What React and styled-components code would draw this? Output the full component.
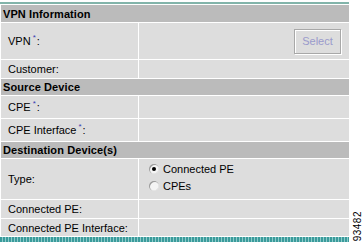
import React from "react";
import styled, { createGlobalStyle } from "styled-components";

const GlobalStyle = createGlobalStyle`
  html, body {
    margin: 0;
    padding: 0;
    background: #ffffff;
  }
  body {
    font-family: "Liberation Sans", Arial, sans-serif;
    font-size: 11px;
    color: #000;
  }
`;

const Page = styled.div`
  display: flex;
  align-items: flex-end;
  width: 363px;
  height: 242px;
  overflow: hidden;
`;

const Panel = styled.div`
  width: 350px;
  padding-top: 2px;
  display: flex;
  flex-direction: column;
`;

const TopRule = styled.div`
  height: 2px;
  background: #82b4aa;
  margin-bottom: 1px;
`;

const Grid = styled.div`
  display: grid;
  grid-template-columns: 137px 1fr;
  gap: 1px;
  background: #ffffff;
  padding-left: 1px;
`;

const SectionHead = styled.div`
  grid-column: 1 / span 2;
  background: #bbbbbb;
  height: ${(p) => p.$h}px;
  display: flex;
  align-items: center;
  padding-left: 2px;
  font-weight: bold;
  font-size: 11px;
  letter-spacing: 0.1px;
`;

const Label = styled.div`
  background: #dddddd;
  height: ${(p) => p.$h}px;
  display: flex;
  align-items: center;
  padding-left: 7px;
  white-space: nowrap;
`;

const Value = styled.div`
  background: #dddddd;
  height: ${(p) => p.$h}px;
  display: flex;
  align-items: center;
  justify-content: ${(p) => (p.$end ? "flex-end" : "flex-start")};
  padding-right: ${(p) => (p.$end ? "8px" : "0")};
`;

const Req = styled.sup`
  color: #3a3ab0;
  font-size: 8px;
  position: relative;
  top: -4px;
  margin: 0 1px 0 2px;
`;

const SelectButton = styled.button`
  width: 47px;
  height: 25px;
  background: #dddddd;
  border: 1px solid #a8a8a8;
  box-shadow: inset 1px 1px 0 #ffffff, 1px 1px 0 #ffffff;
  color: #9a9acc;
  font-family: "Liberation Sans", Arial, sans-serif;
  font-size: 11px;
  padding: 0;
`;

const RadioGroup = styled.div`
  display: flex;
  flex-direction: column;
  gap: 5px;
  padding-left: 10px;
  margin-top: -3px;
`;

const RadioRow = styled.label`
  display: flex;
  align-items: center;
  gap: 4px;
`;

const RadioDot = styled.span`
  width: 10px;
  height: 10px;
  border-radius: 50%;
  background: radial-gradient(circle, #f4f4f4 0 55%, #e6e6e6 56%);
  box-shadow: inset 1px 1px 0 #9a9a9a;
  display: flex;
  align-items: center;
  justify-content: center;
  &::after {
    content: "";
    width: 4px;
    height: 4px;
    border-radius: 50%;
    background: ${(p) => (p.$on ? "#000" : "transparent")};
  }
`;

const BottomRule = styled.div`
  height: 5px;
  margin-top: 1px;
  background: repeating-linear-gradient(
    to right,
    #3a9b9b 0 2px,
    #8ccaca 2px 3px
  );
`;

const FigureId = styled.div`
  writing-mode: vertical-rl;
  transform: rotate(180deg);
  font-size: 10px;
  letter-spacing: 0.5px;
  margin-left: 3px;
  padding-top: 1px;
`;

export default function App() {
  return (
    <>
      <GlobalStyle />
      <Page>
        <Panel>
          <TopRule />
          <Grid>
            <SectionHead $h={17}>VPN Information</SectionHead>
            <Label $h={36}>
              VPN<Req>*</Req>:
            </Label>
            <Value $h={36} $end>
              <SelectButton disabled>Select</SelectButton>
            </Value>
            <Label $h={18}>Customer:</Label>
            <Value $h={18} />

            <SectionHead $h={16}>Source Device</SectionHead>
            <Label $h={22}>
              CPE<Req>*</Req>:
            </Label>
            <Value $h={22} />
            <Label $h={22}>
              CPE Interface<Req>*</Req>:
            </Label>
            <Value $h={22} />

            <SectionHead $h={16}>Destination Device(s)</SectionHead>
            <Label $h={40}>Type:</Label>
            <Value $h={40}>
              <RadioGroup>
                <RadioRow>
                  <RadioDot $on />
                  Connected PE
                </RadioRow>
                <RadioRow>
                  <RadioDot />
                  CPEs
                </RadioRow>
              </RadioGroup>
            </Value>
            <Label $h={18}>Connected PE:</Label>
            <Value $h={18} />
            <Label $h={17}>Connected PE Interface:</Label>
            <Value $h={17} />
          </Grid>
          <BottomRule />
        </Panel>
        <FigureId>93482</FigureId>
      </Page>
    </>
  );
}
